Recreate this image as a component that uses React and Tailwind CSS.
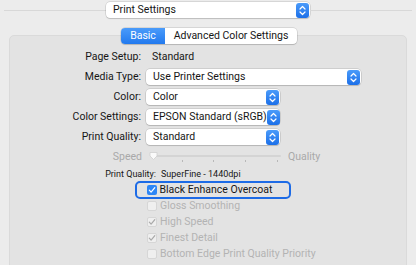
import React from "react"

const Stepper = () => (
    <div className="flex h-[15px] w-[13px] shrink-0 items-center justify-center rounded-[3px] bg-gradient-to-b from-[#4a9bfa] to-[#1b6fe8]">
        <svg width="7" height="11" viewBox="0 0 7 11" fill="none">
            <path d="M1 4l2.5-2.5L6 4M1 7l2.5 2.5L6 7" stroke="#fff" strokeWidth="1.2" strokeLinecap="round" strokeLinejoin="round" />
        </svg>
    </div>
)

const Popup = ({ value, width }) => (
    <div
        className="flex h-[16px] items-center justify-between rounded-[4px] bg-white pl-[7px] pr-[1px] text-[#161616] shadow-[0_0_0_0.5px_rgba(0,0,0,0.18),0_1px_1px_rgba(0,0,0,0.12)]"
        style={{ width }}
    >
        <span className="whitespace-nowrap leading-[16px]">{value}</span>
        <Stepper />
    </div>
)

const Checkbox = ({ checked, disabled }) => (
    <div
        className={
            disabled
                ? "flex h-[10px] w-[10px] items-center justify-center rounded-[2px] border border-[#d6d6d6] bg-[#efefef]"
                : "flex h-[10px] w-[10px] items-center justify-center rounded-[2px] bg-[#2d86f6]"
        }
    >
        {checked && (
            <svg width="8" height="8" viewBox="0 0 8 8" fill="none">
                <path d="M1.3 4.2l1.8 1.9L6.8 1.6" stroke={disabled ? "#a9a9a9" : "#fff"} strokeWidth="1.2" strokeLinecap="round" strokeLinejoin="round" />
            </svg>
        )}
    </div>
)

const Row = ({ label, children }) => (
    <div className="flex h-[16px] items-center">
        <div className="w-[131px] text-right text-[#161616]">{label}</div>
        <div className="ml-[5px] flex items-center">{children}</div>
    </div>
)

export default function App() {
    const options = [
        { label: "Gloss Smoothing", checked: false },
        { label: "High Speed", checked: true },
        { label: "Finest Detail", checked: true },
        { label: "Bottom Edge Print Quality Priority", checked: false }
    ]

    return (
        <div className="h-[265px] w-[416px] overflow-hidden bg-[#ececec] text-[10.5px] font-['Roboto','Liberation_Sans',sans-serif]">
            {/* Preset popup over separator */}
            <div className="flex h-[19px] items-center pt-[1px]">
                <div className="ml-[4px] h-px flex-1 bg-[#d8d8d8]" />
                <Popup value="Print Settings" width={204} />
                <div className="mr-[4px] h-px flex-1 bg-[#d8d8d8]" />
            </div>

            {/* Tabs */}
            <div className="relative z-10 mt-[9px] flex justify-center pl-[2px]">
                <div className="flex h-[16px] items-stretch overflow-hidden rounded-[4px] bg-white shadow-[0_0_0_0.5px_rgba(0,0,0,0.18),0_1px_1px_rgba(0,0,0,0.12)]">
                    <div className="flex w-[44px] items-center justify-center bg-gradient-to-b from-[#4a9bfa] to-[#2179ee] text-white">Basic</div>
                    <div className="flex w-[132px] items-center justify-center whitespace-nowrap text-[#161616]">Advanced Color Settings</div>
                </div>
            </div>

            {/* Panel */}
            <div className="mx-[9px] mt-[-9px] h-[240px] rounded-[5px] border border-[#dadada] bg-[#e3e3e3] pt-[13px]">
                <div className="flex flex-col gap-[4px]">
                    <Row label="Page Setup:">
                        <span className="pl-[6px] text-[#161616]">Standard</span>
                    </Row>
                    <Row label="Media Type:">
                        <Popup value="Use Printer Settings" width={215} />
                    </Row>
                    <Row label="Color:">
                        <Popup value="Color" width={134} />
                    </Row>
                    <Row label="Color Settings:">
                        <Popup value="EPSON Standard (sRGB)" width={134} />
                    </Row>
                    <Row label="Print Quality:">
                        <Popup value="Standard" width={134} />
                    </Row>
                </div>

                {/* Speed / Quality slider */}
                <div className="mt-[4px] flex h-[16px] items-center text-[#a9a9a9]">
                    <div className="w-[132px] text-right">Speed</div>
                    <div className="relative ml-[7px] h-[16px] w-[132px]">
                        <div className="absolute left-[2px] right-0 top-[6px] h-[2px] rounded-full bg-[#d4d4d4]" />
                        {[33, 64, 96, 128].map((x) => (
                            <div key={x} className="absolute top-[11px] h-[2px] w-px bg-[#b8b8b8]" style={{ left: x }} />
                        ))}
                        <svg className="absolute left-0 top-[2px]" width="9" height="10" viewBox="0 0 9 10">
                            <path d="M1 1.5h7v3.5L4.5 8.5 1 5z" fill="#fafafa" stroke="#cfcfcf" strokeWidth="0.8" />
                        </svg>
                    </div>
                    <div className="ml-[7px]">Quality</div>
                </div>

                <div className="mt-[3px] flex h-[13px] items-center text-[9px] text-[#161616]">
                    <div className="w-[146px] text-right">Print Quality:</div>
                    <div className="ml-[5px]">SuperFine - 1440dpi</div>
                </div>

                {/* Checkboxes */}
                <div className="ml-[125px] flex flex-col">
                    <div className="flex h-[18px] w-[156px] items-center rounded-[5px] border-[2.5px] border-[#1d6be6] pl-[9.5px]">
                        <Checkbox checked />
                        <span className="ml-[3px] text-[#161616]">Black Enhance Overcoat</span>
                    </div>
                    <div className="mt-[-1px] flex flex-col">
                        {options.map((o) => (
                            <div key={o.label} className="flex h-[16px] items-center pl-[12px]">
                                <Checkbox checked={o.checked} disabled />
                                <span className="ml-[3px] text-[#b3b3b3]">{o.label}</span>
                            </div>
                        ))}
                    </div>
                </div>
            </div>
        </div>
    )
}
